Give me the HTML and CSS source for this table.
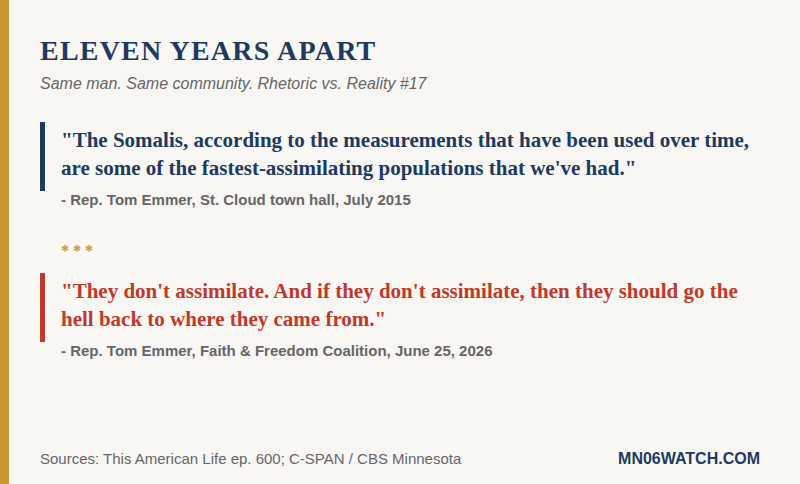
FILE: index.html
```html
<!DOCTYPE html>
<html>
<head>
<meta charset="utf-8">
<link rel="stylesheet" href="styles.css">
</head>
<body>
<div class="card">
  <div class="accent"></div>
  <div class="content">
    <header class="head">
      <h1 class="title">ELEVEN YEARS APART</h1>
      <p class="subtitle">Same man. Same community. Rhetoric vs. Reality #17</p>
    </header>
    <section class="quote quote-then">
      <p class="quote-text">"The Somalis, according to the measurements that have been used over time, are some of the fastest-assimilating populations that we've had."</p>
    </section>
    <p class="attr">- Rep. Tom Emmer, St. Cloud town hall, July 2015</p>
    <p class="stars">* * *</p>
    <section class="quote quote-now">
      <p class="quote-text">"They don't assimilate. And if they don't assimilate, then they should go the hell back to where they came from."</p>
    </section>
    <p class="attr">- Rep. Tom Emmer, Faith &amp; Freedom Coalition, June 25, 2026</p>
    <footer class="foot">
      <span class="sources">Sources: This American Life ep. 600; C-SPAN / CBS Minnesota</span>
      <span class="brand">MN06WATCH.COM</span>
    </footer>
  </div>
</div>
</body>
</html>
```
FILE: styles.css
```css
html, body {
  margin: 0;
  padding: 0;
}
body {
  width: 800px;
  height: 484px;
  background: #f9f7f4;
  font-family: "Liberation Sans", Arial, sans-serif;
  overflow: hidden;
}
.card {
  display: flex;
  width: 800px;
  height: 484px;
}
.accent {
  width: 9px;
  background: #c9952f;
  flex: none;
}
.content {
  flex: 1;
  display: flex;
  flex-direction: column;
  padding: 34px 40px 16px 31px;
}
.title {
  margin: 0;
  font-family: "Liberation Serif", "Times New Roman", serif;
  font-weight: bold;
  font-size: 28px;
  line-height: 34px;
  letter-spacing: 1.2px;
  color: #1e3a5f;
}
.subtitle {
  margin: 6px 0 0;
  font-style: italic;
  font-size: 16px;
  line-height: 20px;
  color: #666666;
}
.quote {
  border-left: 5px solid #1e3a5f;
  padding: 4px 0 9px 16px;
}
.quote-then {
  margin-top: 28px;
}
.quote-now {
  border-left-color: #c0392b;
  margin-top: 13px;
}
.quote-text {
  margin: 0;
  font-family: "Liberation Serif", "Times New Roman", serif;
  font-weight: bold;
  font-size: 21px;
  line-height: 28px;
  color: #1e3a5f;
}
.quote-now .quote-text {
  color: #c0392b;
}
.attr {
  margin: 0 0 0 21px;
  font-weight: bold;
  font-size: 15px;
  line-height: 18px;
  color: #666666;
}
.stars {
  margin: 33px 0 0 21px;
  font-family: "Liberation Serif", serif;
  font-weight: bold;
  font-size: 16px;
  line-height: 18px;
  color: #c9952f;
}
.foot {
  margin-top: auto;
  display: flex;
  justify-content: space-between;
  align-items: baseline;
  line-height: 18px;
}
.sources {
  font-size: 15px;
  color: #666666;
}
.brand {
  font-weight: bold;
  font-size: 16px;
  color: #1e3a5f;
}
```
